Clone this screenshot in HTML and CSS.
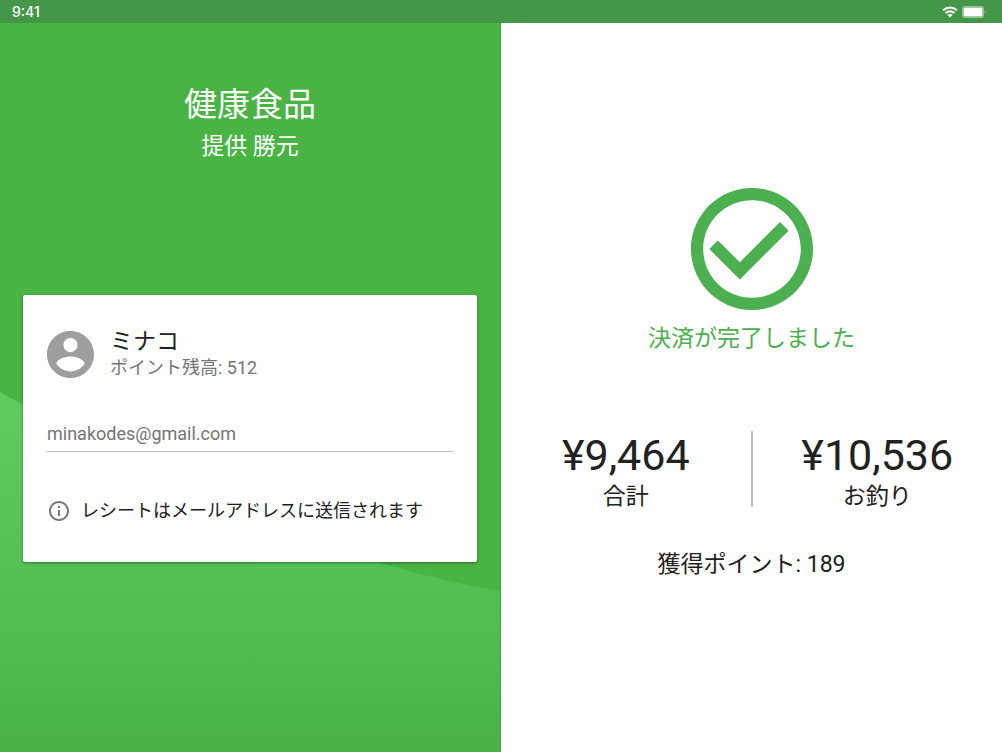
FILE: index.html
```html
<!DOCTYPE html>
<html lang="ja">
<head>
<meta charset="utf-8">
<meta name="viewport" content="width=device-width, initial-scale=1">
<title>健康食品</title>
<link rel="stylesheet" href="styles.css">
</head>
<body>
<header class="status-bar">
  <time class="clock">9:41</time>
  <div class="indicators">
    <svg class="wifi" viewBox="0 0 16 12" aria-hidden="true">
      <path d="M8 11.6 5.5 9a3.6 3.6 0 0 1 5 0z" fill="#fff"/>
      <path d="M3.6 7a6.3 6.3 0 0 1 8.8 0M1.1 4.3a9.9 9.9 0 0 1 13.8 0" fill="none" stroke="#fff" stroke-width="2"/>
    </svg>
    <svg class="battery" viewBox="0 0 24 12" aria-hidden="true">
      <rect x="0.5" y="0.5" width="21" height="11" rx="2" fill="none" stroke="#fff" stroke-opacity="0.45"/>
      <rect x="1.5" y="1.5" width="19" height="9" rx="1" fill="#fff"/>
      <path d="M22.8 4.2v3.6c1.2-.6 1.2-3 0-3.6z" fill="#fff" fill-opacity="0.5"/>
    </svg>
  </div>
</header>
<main class="screen">
  <section class="store">
    <svg class="hill" viewBox="0 0 501 729" preserveAspectRatio="none" aria-hidden="true">
      <defs>
        <linearGradient id="hill-fill" x1="0" y1="0" x2="0" y2="1">
          <stop offset="0" stop-color="#60cb60"/>
          <stop offset="0.5" stop-color="#55c154"/>
          <stop offset="0.8" stop-color="#4db84b"/>
          <stop offset="1" stop-color="#4ab148"/>
        </linearGradient>
      </defs>
      <path d="M0 369Q300 537 501 568V729H0z" fill="url(#hill-fill)"/>
    </svg>
    <div class="store-heading">
      <h1 class="store-name">健康食品</h1>
      <p class="store-owner">提供 勝元</p>
    </div>
    <form class="card">
      <div class="customer">
        <svg class="avatar" viewBox="2 2 20 20" aria-hidden="true"><path fill="#9e9e9e" d="M12 2C6.48 2 2 6.48 2 12s4.48 10 10 10 10-4.48 10-10S17.52 2 12 2zm0 3c1.66 0 3 1.34 3 3s-1.34 3-3 3-3-1.34-3-3 1.34-3 3-3zm0 14.2c-2.5 0-4.71-1.28-6-3.22.03-1.99 4-3.08 6-3.08 1.99 0 5.97 1.09 6 3.08-1.29 1.94-3.5 3.22-6 3.22z"/></svg>
        <div>
          <h2 class="customer-name">ミナコ</h2>
          <p class="balance">ポイント残高: 512</p>
        </div>
      </div>
      <input class="email" type="email" value="minakodes@gmail.com" aria-label="メールアドレス">
      <p class="notice">
        <svg class="info" viewBox="2 2 20 20" aria-hidden="true"><path fill="#757575" d="M11 17h2v-6h-2v6zm1-15C6.48 2 2 6.48 2 12s4.48 10 10 10 10-4.48 10-10S17.52 2 12 2zm0 18c-4.41 0-8-3.59-8-8s3.59-8 8-8 8 3.59 8 8-3.59 8-8 8zM11 9h2V7h-2v2z"/></svg>
        <span>レシートはメールアドレスに送信されます</span>
      </p>
    </form>
  </section>
  <section class="result">
    <svg class="check" viewBox="2 2 20 20" aria-hidden="true"><path fill="#4caf50" d="M16.59 7.58 10 14.17l-3.59-3.58L5 12l5 5 8-8zM12 2C6.48 2 2 6.48 2 12s4.48 10 10 10 10-4.48 10-10S17.52 2 12 2zm0 18c-4.42 0-8-3.58-8-8s3.58-8 8-8 8 3.58 8 8-3.58 8-8 8z"/></svg>
    <p class="done">決済が完了しました</p>
    <div class="totals">
      <div class="total">
        <p class="amount">¥9,464</p>
        <p class="label">合計</p>
      </div>
      <div class="divider"></div>
      <div class="total">
        <p class="amount">¥10,536</p>
        <p class="label">お釣り</p>
      </div>
    </div>
    <p class="points">獲得ポイント: 189</p>
  </section>
</main>
</body>
</html>
```
FILE: styles.css
```css
* {
  box-sizing: border-box;
}

body {
  display: flex;
  flex-direction: column;
  min-height: 100vh;
  margin: 0;
  background: #fff;
  color: #212121;
  font-family: Roboto, "Noto Sans CJK JP", sans-serif;
}

h1,
h2,
p {
  margin: 0;
  font-weight: 400;
}

.status-bar {
  display: flex;
  align-items: center;
  justify-content: space-between;
  height: 23px;
  padding: 0 16px 0 12px;
  background: #449648;
  color: #fff;
}

.clock {
  font: 500 14px/22px Inter, sans-serif;
}

.indicators {
  display: flex;
  align-items: center;
  gap: 4px;
}

.wifi {
  width: 16px;
  height: 12px;
}

.battery {
  width: 24px;
  height: 12px;
}

.screen {
  display: grid;
  flex: 1;
  grid-template-columns: 1fr 1fr;
}

.store {
  position: relative;
  padding: 58px 23px 24px;
  border-right: 1px solid #45a148;
  background: #49b344;
}

.hill {
  position: absolute;
  inset: 0;
  width: 100%;
  height: 100%;
}

.store-heading {
  position: relative;
  color: #fff;
  text-align: center;
}

.store-name {
  font-size: 33px;
  line-height: 48px;
}

.store-owner {
  font-size: 23px;
  line-height: 36px;
}

.card {
  position: relative;
  margin-top: 130px;
  padding: 33px 24px 37px;
  border-radius: 2px;
  background: #fff;
  box-shadow: 0 1px 3px rgba(0, 0, 0, 0.4);
}

.customer {
  display: flex;
  align-items: center;
  gap: 16px;
}

.avatar {
  width: 47px;
  height: 47px;
}

.customer-name {
  font-size: 23px;
  line-height: 28px;
}

.balance {
  color: #757575;
  font-size: 18px;
  line-height: 24px;
}

.email {
  display: block;
  width: 100%;
  height: 36px;
  margin-top: 36px;
  padding: 0;
  border: 0;
  border-bottom: 1px solid #bdbdbd;
  border-radius: 0;
  outline: 0;
  background: none;
  color: #757575;
  font: 18px/24px Roboto, sans-serif;
}

.notice {
  display: flex;
  align-items: center;
  gap: 12px;
  margin-top: 45px;
  padding: 0 2px;
  font-size: 18px;
  line-height: 28px;
}

.info {
  width: 20px;
  height: 20px;
}

.result {
  display: flex;
  flex-direction: column;
  align-items: center;
  justify-content: center;
  padding-bottom: 6px;
}

.check {
  width: 122px;
  height: 122px;
}

.done {
  margin-top: 13px;
  color: #4caf50;
  font-size: 23px;
  line-height: 32px;
}

.totals {
  display: grid;
  grid-template-columns: 1fr 2px 1fr;
  width: 100%;
  margin-top: 76px;
  text-align: center;
}

.amount {
  font-size: 43px;
  line-height: 48px;
}

.label {
  font-size: 23px;
  line-height: 36px;
}

.divider {
  height: 76px;
  background: #bdbdbd;
}

.points {
  margin-top: 34px;
  font-size: 23px;
  line-height: 32px;
}
```
